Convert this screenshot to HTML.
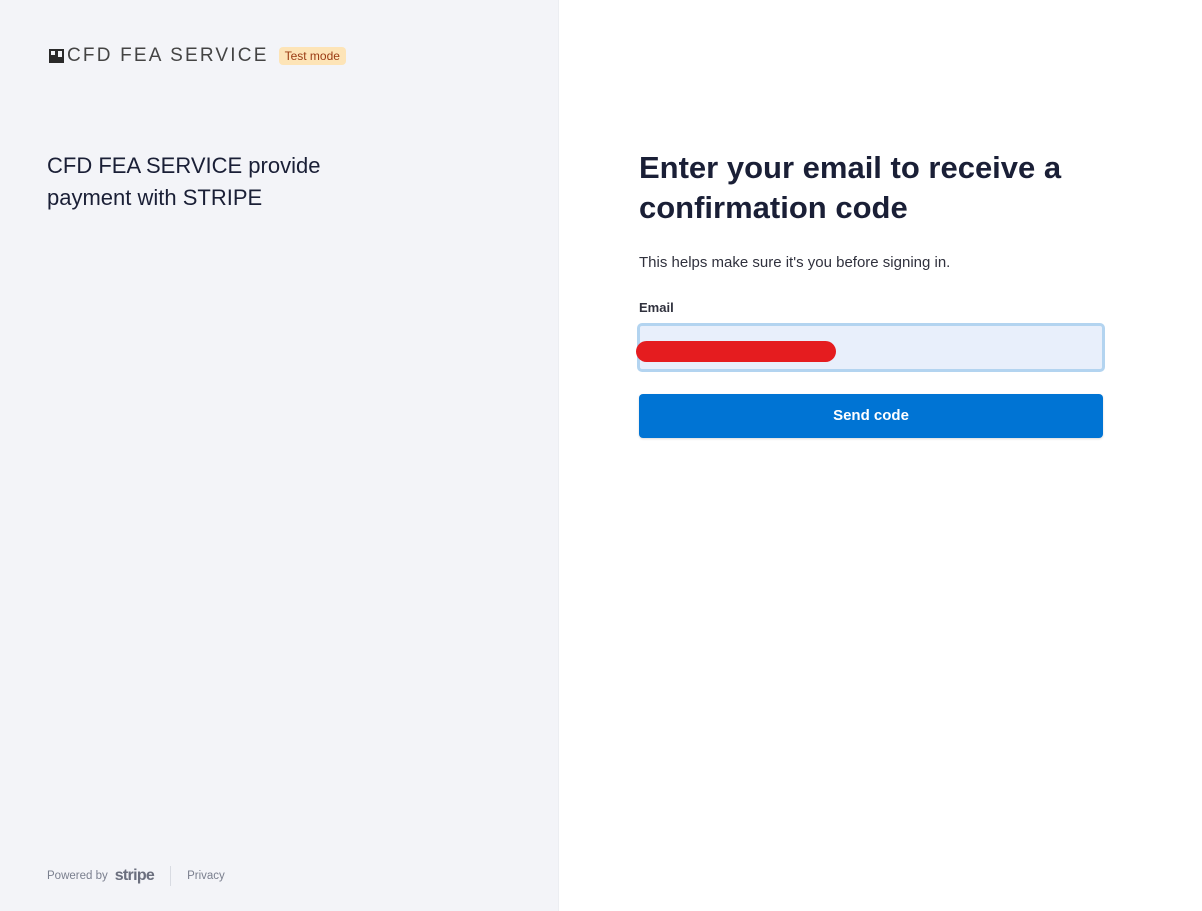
<!DOCTYPE html>
<html><head><style>
*{margin:0;padding:0;box-sizing:border-box}
body{width:1202px;height:911px;font-family:"Liberation Sans",sans-serif;position:relative;overflow:hidden;background:#fff}
.left{position:absolute;left:0;top:0;width:559px;height:911px;background:#f3f4f8;border-right:1px solid #eceef2}
.logo{position:absolute;left:49px;top:45px;display:flex;align-items:center}
.logo .name{font-size:19px;letter-spacing:2.2px;color:#444;font-weight:300;margin-left:2px}
.badge{margin-left:10px;background:#fde4b7;color:#9a3b13;font-size:12px;padding:2px 6px;border-radius:4px}
.tag{position:absolute;left:47px;top:150px;font-size:22px;line-height:32px;color:#1a1f36}
.foot{position:absolute;left:47px;top:866px;font-size:11.5px;color:#7a7f8e;display:flex;align-items:center}
.stripe{font-weight:bold;font-size:16px;color:#6b6f7e;margin-left:7px;letter-spacing:-0.7px}
.sep{width:1px;height:20px;background:#d8dbe2;margin:0 16px}
h1{position:absolute;left:639px;top:148px;font-size:31px;line-height:40px;color:#1a1f36;font-weight:bold;width:470px}
.sub{position:absolute;left:639px;top:254px;font-size:15px;color:#30313d}
.lab{position:absolute;left:639px;top:300px;font-size:13px;font-weight:bold;color:#30313d}
.inp{position:absolute;left:637px;top:323px;width:468px;height:49px;border:3px solid #b3d4f0;border-radius:5px;background:#e8effb}
.red{position:absolute;left:636px;top:341px;width:200px;height:21px;background:#e51c1f;border-radius:11px}
.btn{position:absolute;left:639px;top:394px;width:464px;height:44px;background:#0074d4;border-radius:4px;color:#fff;font-weight:bold;font-size:15px;text-align:center;line-height:44px;box-shadow:0 1px 2px rgba(0,0,0,.15)}
</style></head><body>
<div class="left">
<div class="logo"><svg width="16" height="16" viewBox="0 0 16 16"><rect x="0" y="1" width="15" height="14" fill="#2a2a2a"/><path d="M2 3h4v4H2zM9 3h4v6H9z" fill="#f3f4f8"/></svg><span class="name">CFD FEA SERVICE</span><span class="badge">Test mode</span></div>
<div class="tag">CFD FEA SERVICE provide<br>payment with STRIPE</div>
<div class="foot">Powered by <span class="stripe">stripe</span><span class="sep"></span>Privacy</div>
</div>
<h1>Enter your email to receive a confirmation code</h1>
<div class="sub">This helps make sure it's you before signing in.</div>
<div class="lab">Email</div>
<div class="inp"></div>
<div class="red"></div>
<div class="btn">Send code</div>
</body></html>
